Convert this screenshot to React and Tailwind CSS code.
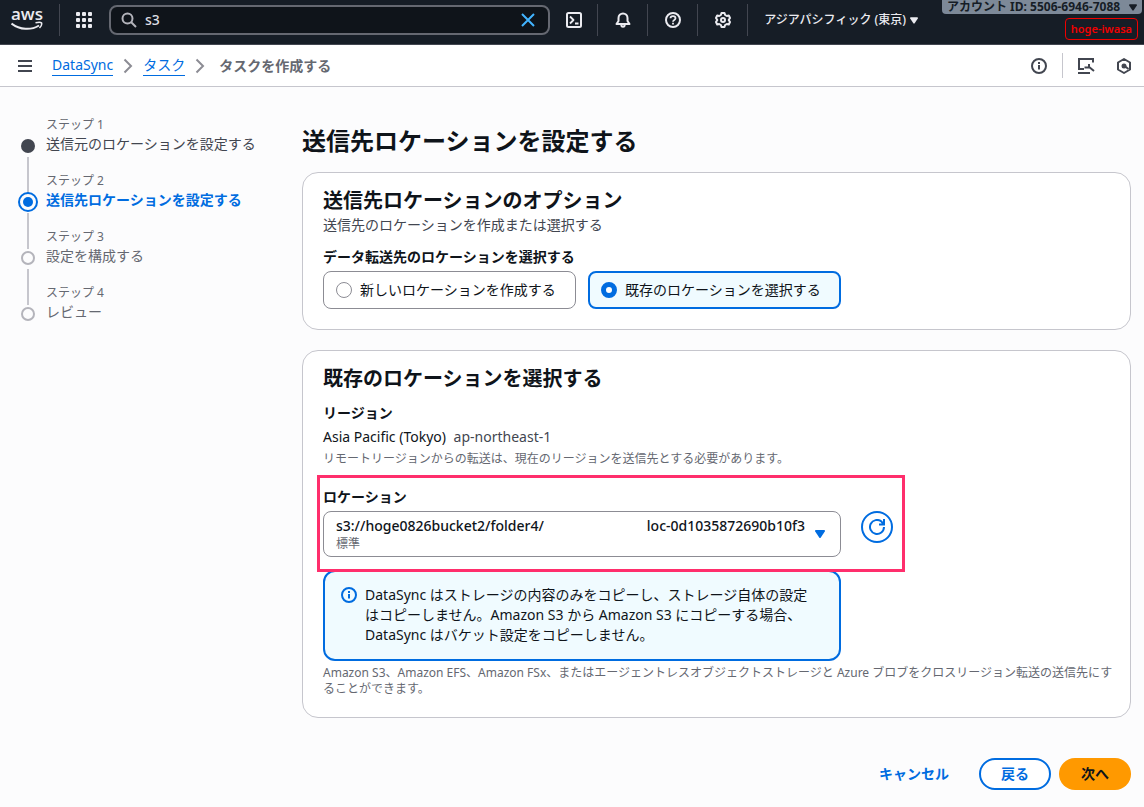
import React, { useState } from "react";

const steps = [
  { label: "ステップ 1", title: "送信元のロケーションを設定する", status: "done" },
  { label: "ステップ 2", title: "送信先ロケーションを設定する", status: "active" },
  { label: "ステップ 3", title: "設定を構成する", status: "todo" },
  { label: "ステップ 4", title: "レビュー", status: "todo" },
];

const options = [
  { value: "new", label: "新しいロケーションを作成する" },
  { value: "existing", label: "既存のロケーションを選択する" },
];

const Icon = ({ children, className = "w-4 h-4" }) => (
  <svg
    viewBox="0 0 16 16"
    fill="none"
    stroke="currentColor"
    strokeWidth="2"
    strokeLinejoin="round"
    className={`${className} shrink-0`}
    aria-hidden="true"
  >
    {children}
  </svg>
);

const Caret = ({ className }) => (
  <svg viewBox="0 0 10 8" fill="currentColor" className={className} aria-hidden="true">
    <path d="M1 0h8a1 1 0 0 1 .8 1.500L5.800 7.400a1 1 0 0 1-1.600 0L.2 1.500A1 1 0 0 1 1 0z" />
  </svg>
);

const InfoIcon = () => (
  <Icon>
    <circle cx="8" cy="8" r="7" />
    <path d="M8 11.500V7M8 6V4" />
  </Icon>
);

const ChevronRight = () => (
  <Icon className="w-4 h-4 text-[#8c8c94]">
    <path d="M4.500 1.500L11 8l-6.500 6.500" strokeLinejoin="miter" />
  </Icon>
);

const NavIcon = ({ title, children, className = "w-[50px]" }) => (
  <button
    title={title}
    className={`${className} h-8 flex items-center justify-center border-r border-[#424650] text-[#ebebf0]`}
  >
    <Icon>{children}</Icon>
  </button>
);

const TopBar = () => {
  const [query, setQuery] = useState("s3");

  return (
    <header className="h-[45px] bg-[#161d26] border-b border-[#424650] flex items-start">
      <a href="#home" className="w-[59px] h-10 pl-[11px] flex flex-col text-[#ebebf0]" aria-label="aws">
        <span className="h-[21px] text-[17px] leading-7 font-semibold font-['Open_Sans',sans-serif]">aws</span>
        <svg viewBox="0 0 32 9" fill="none" stroke="currentColor" strokeWidth="2" className="w-8 h-[9px]">
          <path d="M.5 2.500C9 9 20 9.500 28 4.500" />
          <path d="M24.500 1.800C27 1.200 29.500 1 30.500 1.800C31 3 30 5.500 28.500 7" strokeWidth="1.500" />
        </svg>
      </a>
      <div className="h-10 py-1">
        <button title="サービス" className="w-[50px] h-8 pr-[2px] border-l border-[#424650] flex items-center justify-center text-[#ebebf0]">
          <svg viewBox="0 0 16 16" fill="currentColor" className="w-4 h-4">
            {[0, 6, 12].map((y) =>
              [0, 6, 12].map((x) => <rect key={`${x}-${y}`} x={x} y={y} width="4" height="4" rx="1" />)
            )}
          </svg>
        </button>
      </div>
      <div className="mt-[5px] flex-1 min-w-0 h-[30px] pl-[10px] pr-3 flex items-center gap-2 rounded-lg border-2 border-[#656871] bg-[#0f141a]">
        <svg viewBox="0 0 16 16" fill="none" stroke="#b4b4bb" strokeWidth="2" className="w-4 h-4 shrink-0">
          <circle cx="6.500" cy="6.500" r="5" />
          <path d="M10 10l5 5" />
        </svg>
        <input
          aria-label="検索"
          value={query}
          onChange={(e) => setQuery(e.target.value)}
          className="flex-1 min-w-0 bg-transparent text-sm font-medium text-[#dedee3] outline-none"
        />
        <button title="クリア" onClick={() => setQuery("")} className="text-[#42b4ff]">
          <Icon>
            <path d="M2 2l12 12M14 2L2 14" />
          </Icon>
        </button>
      </div>
      <nav className="h-10 py-1 flex items-center">
        <NavIcon title="CloudShell" className="w-12">
          <rect x="1" y="1" width="14" height="14" rx="1.500" />
          <path d="M4 4.500L7.500 8L4 11.500M9 11.500h3.500" strokeWidth="1.800" />
        </NavIcon>
        <NavIcon title="通知">
          <path d="M3.500 9V6a4.500 4.500 0 0 1 9 0v3L14.500 12H1.500z" />
          <path d="M6.300 12.500c0 3 3.400 3 3.400 0" />
        </NavIcon>
        <NavIcon title="ヘルプ">
          <circle cx="8" cy="8" r="7" />
          <path d="M5.500 6.300c0-3 5-3 5 0C10.500 8 8 7.800 8 9.700M8 10.800v1.700" strokeWidth="1.800" />
        </NavIcon>
        <NavIcon title="設定">
          <path d="M6.500 1h3l.6 2 1.700 1 2-.5L15 6l-1.300 2L15 10l-1.200 2.500-2-.5-1.700 1-.6 2h-3l-.6-2-1.700-1-2 .5L1 10l1.300-2L1 6l1.200-2.500 2 .5 1.700-1z" />
          <circle cx="8" cy="8" r="2" />
        </NavIcon>
        <button className="px-4 h-8 flex items-center gap-1 text-xs font-medium whitespace-nowrap text-[#ebebf0]">
          アジアパシフィック (東京)
          <Caret className="w-2 h-[7px]" />
        </button>
      </nav>
      <div className="pl-2 pr-[2px] shrink-0 flex flex-col items-end gap-1">
        <button className="w-[200px] h-[14px] px-[5px] flex items-center justify-between rounded-b bg-[#7d8998] text-xs leading-[14px] font-bold whitespace-nowrap text-[#161d26]">
          アカウント ID: 5506-6946-7088
          <Caret className="w-2 h-[7px]" />
        </button>
        <button className="mr-1 h-[22px] px-[5px] rounded border border-[#f00000] text-[11px] font-semibold text-[#f00000]">
          hoge-iwasa
        </button>
      </div>
    </header>
  );
};

const Breadcrumbs = () => (
  <div className="h-[42px] pl-[18px] pr-3 flex items-center justify-between bg-white border-b border-[#c6c6cd]">
    <div className="flex items-center text-sm">
      <button title="メニュー" className="mr-5 text-[#424650]">
        <svg viewBox="0 0 14 14" stroke="currentColor" strokeWidth="2" className="w-[14px] h-[14px]">
          <path d="M0 2h14M0 7h14M0 12h14" />
        </svg>
      </button>
      <nav className="flex items-center gap-[7px]">
        <a href="#datasync" className="leading-5 text-[#006ce0] border-b border-[#006ce0]">DataSync</a>
        <ChevronRight />
        <a href="#tasks" className="leading-5 text-[#006ce0] border-b border-[#006ce0]">タスク</a>
        <ChevronRight />
        <span className="ml-1 font-bold text-[#656871]">タスクを作成する</span>
      </nav>
    </div>
    <div className="flex items-center text-[#424650]">
      <button title="情報" className="pr-[15px]">
        <InfoIcon />
      </button>
      <button title="ツール" className="h-[25px] pl-[14px] pr-[21px] border-l border-[#c6c6cd]">
        <svg viewBox="0 0 18 16" fill="none" stroke="currentColor" strokeWidth="2" className="w-[18px] h-4">
          <path d="M7 11H2V1h14v3.500" />
          <path d="M1 15h12" />
          <path d="M7.500 9.500h4.500V6M11.500 8.500L17 13" />
        </svg>
      </button>
      <button title="Amazon Q">
        <Icon>
          <path d="M8 1l6 3.500v7L8 15l-6-3.500v-7z" />
          <circle cx="8" cy="8" r="2.500" fill="currentColor" stroke="none" />
          <path d="M8.500 8l4 3" />
        </Icon>
      </button>
    </div>
  </div>
);

const StepMarker = ({ status }) => {
  if (status === "done") return <span className="w-[14px] h-[14px] rounded-full bg-[#424650]"></span>;
  if (status === "active") {
    return (
      <span className="w-5 h-5 -my-[3px] rounded-full border-2 border-[#006ce0] flex items-center justify-center">
        <span className="w-[10px] h-[10px] rounded-full bg-[#006ce0]"></span>
      </span>
    );
  }
  return <span className="w-[14px] h-[14px] rounded-full border-2 border-[#b4b4bb]"></span>;
};

const titleStyles = {
  done: "text-[#424650]",
  active: "font-bold text-[#006ce0]",
  todo: "text-[#656871]",
};

const Steps = () => (
  <ol className="w-[302px] shrink-0 pt-[30px] pl-[18px]">
    {steps.map((step, i) => (
      <li key={step.label} className="h-14 flex gap-2">
        <div className="w-5 pt-[22px] h-[78px] flex flex-col items-center gap-[2px]">
          <StepMarker status={step.status} />
          {i < steps.length - 1 && <span className="my-[2px] w-[2px] flex-1 bg-[#c6c6cd]"></span>}
        </div>
        <div>
          <p className="text-xs leading-4 text-[#656871]">{step.label}</p>
          <p className={`mt-px text-sm leading-5 ${titleStyles[step.status]}`}>{step.title}</p>
        </div>
      </li>
    ))}
  </ol>
);

const Card = ({ title, children }) => (
  <section className="pl-5 pr-4 pt-4 pb-5 bg-white border border-[#c6c6cd] rounded-2xl">
    <h2 className="text-xl leading-6 font-bold">{title}</h2>
    {children}
  </section>
);

const App = () => {
  const [choice, setChoice] = useState("existing");

  return (
    <div className="min-h-screen bg-[#fcfcfd] text-sm text-[#0f141a] font-['Noto_Sans','Noto_Sans_CJK_JP',sans-serif]">
      <TopBar />
      <Breadcrumbs />

      <div className="flex">
        <Steps />

        <main className="flex-1 min-w-0 pt-[39px] pr-[13px] pb-4">
          <h1 className="text-2xl leading-[30px] font-bold">送信先ロケーションを設定する</h1>

          <div className="mt-4 flex flex-col gap-5">
            <Card title="送信先ロケーションのオプション">
              <p className="mt-[2px] leading-5 text-[#424650]">送信先のロケーションを作成または選択する</p>
              <fieldset className="mt-3">
                <legend className="leading-5 font-bold">データ転送先のロケーションを選択する</legend>
                <div className="mt-1 max-w-[518px] grid grid-cols-2 gap-3">
                  {options.map((opt) => (
                    <label
                      key={opt.value}
                      className={`h-[38px] flex items-center gap-2 rounded-lg ${
                        choice === opt.value
                          ? "px-[11px] border-2 border-[#006ce0] bg-[#f0fbff]"
                          : "px-3 border border-[#8c8c94] bg-white"
                      }`}
                    >
                      <input
                        type="radio"
                        name="location"
                        value={opt.value}
                        checked={choice === opt.value}
                        onChange={() => setChoice(opt.value)}
                        className="appearance-none w-4 h-4 rounded-full border border-[#8c8c94] bg-white checked:border-[5px] checked:border-[#006ce0]"
                      />
                      {opt.label}
                    </label>
                  ))}
                </div>
              </fieldset>
            </Card>

            <Card title="既存のロケーションを選択する">
              <p className="mt-3 leading-5 font-bold">リージョン</p>
              <p className="mt-1 leading-5">
                Asia Pacific (Tokyo) <span className="ml-1 text-[#424650]">ap-northeast-1</span>
              </p>
              <p className="mt-1 text-xs leading-4 text-[#656871]">
                リモートリージョンからの転送は、現在のリージョンを送信先とする必要があります。
              </p>

              <div className="relative mt-5 max-w-[570px]">
                <label htmlFor="destination" className="block leading-5 font-bold">ロケーション</label>
                <div className="mt-1 flex items-start gap-5">
                  <div className="relative flex-1">
                    <select
                      id="destination"
                      className="appearance-none block w-full h-[46px] pl-3 pt-1 pb-5 leading-5 font-medium rounded-lg border border-[#8c8c94] bg-white"
                    >
                      <option>s3://hoge0826bucket2/folder4/</option>
                    </select>
                    <span className="absolute left-[13px] bottom-[5px] text-xs leading-4 text-[#656871] pointer-events-none">標準</span>
                    <span className="absolute right-9 top-[5px] leading-5 font-medium pointer-events-none">loc-0d1035872690b10f3</span>
                    <Caret className="absolute right-4 top-[19px] w-[10px] h-2 text-[#006ce0] pointer-events-none" />
                  </div>
                  <button
                    title="更新"
                    className="w-8 h-8 rounded-full border-2 border-[#006ce0] text-[#006ce0] flex items-center justify-center"
                  >
                    <Icon>
                      <path d="M15 8a7 7 0 1 1-2.500-5.400L14.500 5M15 0v5.500h-5" strokeLinejoin="miter" />
                    </Icon>
                  </button>
                </div>
                {/* Highlight frame */}
                <div className="absolute z-10 -left-[6px] -right-3 -top-3 -bottom-[15px] border-3 border-[#ff2e6c] pointer-events-none"></div>
              </div>

              <div className="mt-[13px] max-w-[518px] pl-4 pr-6 pt-[13px] pb-[14px] flex gap-2 rounded-xl border-2 border-[#006ce0] bg-[#f0fbff]">
                <span className="pt-[2px] text-[#006ce0]">
                  <InfoIcon />
                </span>
                <p className="leading-5">
                  DataSync はストレージの内容のみをコピーし、ストレージ自体の設定はコピーしません。Amazon S3 から Amazon S3 にコピーする場合、DataSync はバケット設定をコピーしません。
                </p>
              </div>
              <p className="mt-1 text-xs leading-4 text-[#656871]">
                Amazon S3、Amazon EFS、Amazon FSx、またはエージェントレスオブジェクトストレージと Azure ブロブをクロスリージョン転送の送信先にすることができます。
              </p>
            </Card>
          </div>

          <div className="mt-10 flex justify-end gap-2 font-bold">
            <button className="h-8 px-[22px] text-[#006ce0]">キャンセル</button>
            <button className="h-8 px-5 rounded-full border-2 border-[#006ce0] bg-white text-[#006ce0]">戻る</button>
            <button className="h-8 px-[22px] rounded-full bg-[#ff9900]">次へ</button>
          </div>
        </main>
      </div>
    </div>
  );
};

export default App;
